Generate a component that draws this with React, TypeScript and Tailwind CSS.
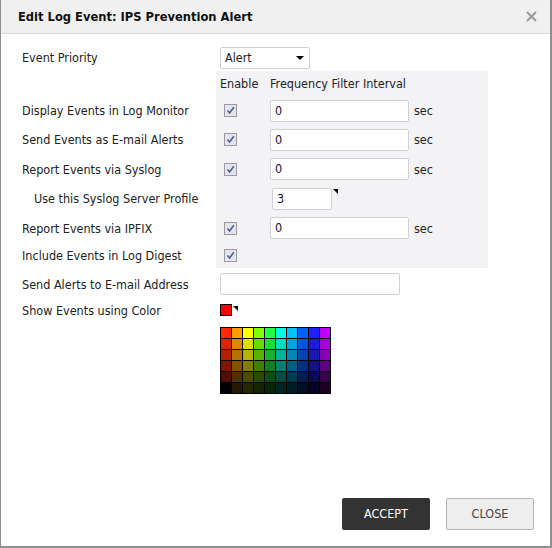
import React from "react";

const gridColors: string[][] = [
  ["#ff2800", "#ffa000", "#ffff00", "#80ff00", "#20ff40", "#00ffe0", "#00c0ff", "#0060ff", "#2020ff", "#c000ff"],
  ["#dd2200", "#dd8800", "#dddd00", "#66dd00", "#1cdd38", "#00ddc0", "#00a6dd", "#0055dd", "#1c1cdd", "#a600dd"],
  ["#b31f00", "#b37300", "#b3b300", "#5ab300", "#17b32f", "#00b39d", "#0087b3", "#0045b3", "#1a1ab3", "#8a00b3"],
  ["#801600", "#805200", "#808000", "#408000", "#118022", "#008070", "#006080", "#003080", "#131380", "#600080"],
  ["#4d0d00", "#4d3000", "#4d4d00", "#264d00", "#0b4d14", "#004d44", "#003a4d", "#001d4d", "#0b0b4d", "#3a004d"],
  ["#000000", "#261800", "#262600", "#132600", "#052608", "#002622", "#001d26", "#000f26", "#050526", "#1d0026"],
];

function Check() {
  return (
    <div className="w-[13px] h-[13px] border border-[#9a9aa6] bg-[#e4e4ea] flex items-center justify-center">
      <svg width="9" height="9" viewBox="0 0 9 9">
        <path d="M1.5 4.5 L3.6 7 L7.8 1.2" fill="none" stroke="#4b5c9c" strokeWidth="1.6" />
      </svg>
    </div>
  );
}

function Corner() {
  return (
    <svg width="5" height="5" viewBox="0 0 5 5" className="self-start">
      <polygon points="0,0 5,0 5,5" fill="#000" />
    </svg>
  );
}

function TextBox({ value, w }: { value: string; w: string }) {
  return (
    <div className={`${w} h-[22px] border border-[#cfcfd4] rounded-[2px] bg-white flex items-center pl-[4px] pt-[1px] text-[#141432]`}>
      {value}
    </div>
  );
}

function Row({
  label,
  indent,
  h,
  gray,
  children,
}: {
  label: string;
  indent?: boolean;
  h: string;
  gray?: boolean;
  children?: React.ReactNode;
}) {
  return (
    <div className={`flex ${h}`}>
      <div className={`w-[194px] flex items-center pt-[2px] ${indent ? "pl-[12px]" : ""}`}>{label}</div>
      <div className={`w-[272px] flex items-center ${gray ? "bg-[#f3f3f6]" : ""}`}>{children}</div>
    </div>
  );
}

function FreqRow({ label, h }: { label: string; h: string }) {
  return (
    <Row label={label} h={h} gray>
      <div className="w-[54px] pl-[8px]">
        <Check />
      </div>
      <TextBox value="0" w="w-[139px]" />
      <span className="ml-[5px] pt-[2px]">sec</span>
    </Row>
  );
}

export default function App() {
  return (
    <div className="w-[552px] h-[548px] bg-white border-l border-r-2 border-b-2 border-[#8e8e8e] flex flex-col font-['DejaVu_Sans',sans-serif] font-stretch-condensed text-[12.5px] text-[#222]">
      <div className="h-[34px] shrink-0 bg-[#f0f0f0] border-b border-[#d9d9d9] flex items-center justify-between pl-[17px] pr-[13px]">
        <div className="font-bold text-[12.8px] text-[#111] pt-[1px]">Edit Log Event: IPS Prevention Alert</div>
        <svg width="11" height="11" viewBox="0 0 11 11">
          <path d="M1 1 L10 10 M10 1 L1 10" stroke="#9a9a9a" strokeWidth="2" />
        </svg>
      </div>

      <div className="pl-[21px] pt-[10px] flex flex-col">
        <Row label="Event Priority" h="h-[27px]">
          <div className="ml-[4px] w-[90px] h-[22px] border border-[#cfcfd4] rounded-[2px] bg-white flex items-center justify-between pl-[4px] pr-[5px]">
            <span className="pt-[1px]">Alert</span>
            <div className="w-0 h-0 border-l-[4px] border-r-[4px] border-t-[4px] border-l-transparent border-r-transparent border-t-black" />
          </div>
        </Row>

        <div className="flex flex-col">
          <Row label="" h="h-[25px]" gray>
            <span className="w-[54px] pl-[4px] pt-[2px]">Enable</span>
            <span className="pt-[2px]">Frequency Filter Interval</span>
          </Row>
          <FreqRow label="Display Events in Log Monitor" h="h-[29px]" />
          <FreqRow label="Send Events as E-mail Alerts" h="h-[29px]" />
          <FreqRow label="Report Events via Syslog" h="h-[30px]" />
          <Row label="Use this Syslog Server Profile" indent h="h-[29px]" gray>
            <div className="ml-[56px] flex items-start">
              <TextBox value="3" w="w-[60px]" />
              <div className="ml-[1px] mt-[1px] flex">
                <Corner />
              </div>
            </div>
          </Row>
          <FreqRow label="Report Events via IPFIX" h="h-[30px]" />
          <Row label="Include Events in Log Digest" h="h-[25px]" gray>
            <div className="pl-[8px]">
              <Check />
            </div>
          </Row>
        </div>

        <div className="mt-[2px]">
          <Row label="Send Alerts to E-mail Address" h="h-[28px]">
            <div className="ml-[4px]">
              <TextBox value="" w="w-[180px]" />
            </div>
          </Row>
        </div>
        <Row label="Show Events using Color" h="h-[24px]">
          <div className="ml-[4px] flex items-start">
            <div className="w-[12px] h-[12px] border border-black bg-[#ff0000]" />
            <div className="ml-[1px] mt-[2px] flex">
              <Corner />
            </div>
          </div>
        </Row>

        <div className="ml-[198px] mt-[5px] w-[111px] bg-black p-px grid grid-cols-10 gap-px">
          {gridColors.flat().map((c, i) => (
            <div key={i} className="w-[10px] h-[10px]" style={{ backgroundColor: c }} />
          ))}
        </div>
      </div>

      <div className="mt-auto flex justify-end gap-[16px] pr-[16px] pb-[16px]">
        <button className="w-[88px] h-[32px] bg-[#333333] text-white rounded-[2px] text-[12.5px]">ACCEPT</button>
        <button className="w-[88px] h-[32px] bg-[#eeeeee] border border-[#b4b4b4] text-[#444] rounded-[2px] text-[12.5px]">CLOSE</button>
      </div>
    </div>
  );
}
